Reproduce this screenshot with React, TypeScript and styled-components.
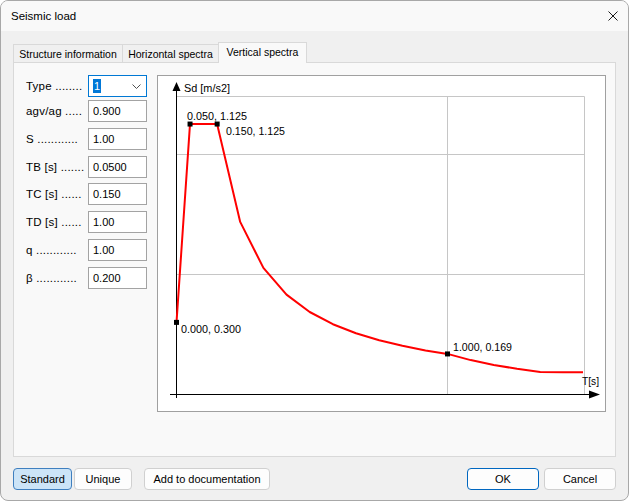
import styled, { createGlobalStyle } from 'styled-components';

const GlobalStyle = createGlobalStyle`
  html, body {
    margin: 0;
    padding: 0;
    background: #ffffff;
  }
  body {
    color: #000000;
    font-family: 'Liberation Sans', Arial, sans-serif;
    font-size: 11px;
  }
  * {
    box-sizing: border-box;
  }
`;

interface TabProps {
  active?: boolean
  width: number
}

interface ButtonProps {
  width: number
  pressed?: boolean
  primary?: boolean
}

interface RowProps {
  tight?: boolean
}

interface GroupProps {
  gap: number
}

const fields = [
  { label: 'agv/ag .....', value: '0.900' },
  { label: 'S ............', value: '1.00' },
  { label: 'TB [s] .......', value: '0.0500' },
  { label: 'TC [s] ......', value: '0.150' },
  { label: 'TD [s] ......', value: '1.00' },
  { label: 'q ............', value: '1.00' },
  { label: 'β ............', value: '0.200' },
];

// chart scale, in svg coords of the plot box
const X = (t: number) => 18.5 + t * 271;
const Y = (v: number) => 318.5 - v * 240.4;

const spectrum = () => {
  const pts: [number, number][] = [[0, 0.3], [0.05, 1.125], [0.15, 1.125]];
  for (let t = 0.235; t < 1.0; t += 0.0855) pts.push([t, (1.125 * 0.15) / t]);
  pts.push([1.0, 0.16875]);
  for (let t = 1.0855; t < 1.5; t += 0.0855) pts.push([t, Math.max((1.125 * 0.15) / (t * t), 0.0928)]);
  pts.push([1.5, 0.0928]);
  return pts.map(([t, v]) => `${X(t).toFixed(1)},${Y(v).toFixed(1)}`).join(' ');
};

const markers: [number, number][] = [[0, 0.3], [0.05, 1.125], [0.15, 1.125], [1.0, 0.16875]];

const labels = [
  { x: 26, y: 16, len: 46, text: 'Sd [m/s2]' },
  { x: 29, y: 44, len: 60, text: '0.050, 1.125' },
  { x: 68, y: 59, len: 59, text: '0.150, 1.125' },
  { x: 23, y: 257, len: 60, text: '0.000, 0.300' },
  { x: 295, y: 274.5, len: 59, text: '1.000, 0.169' },
  { x: 424, y: 309, len: 17, text: 'T[s]' },
];

const Chart = () => (
  <svg width="447" height="335" viewBox="0 0 447 335">
    <g stroke="#c6c6c6" strokeWidth="1" fill="none">
      <line x1="18.5" y1="20.5" x2="426.5" y2="20.5" />
      <line x1="18.5" y1="78.5" x2="426.5" y2="78.5" />
      <line x1="18.5" y1="198.5" x2="426.5" y2="198.5" />
      <line x1="289.5" y1="20.5" x2="289.5" y2="318.5" />
      <line x1="426.5" y1="20.5" x2="426.5" y2="318.5" />
    </g>
    <g stroke="#000000" strokeWidth="1">
      <line x1="18.5" y1="8" x2="18.5" y2="322" />
      <line x1="12" y1="318.5" x2="436" y2="318.5" />
    </g>
    <polygon points="18.5,6 14.5,15 22.5,15" fill="#000000" />
    <polygon points="442,318.5 431,314.5 431,322.5" fill="#000000" />
    <polyline points={spectrum()} fill="none" stroke="#ff0000" strokeWidth="2" strokeLinejoin="round" />
    {markers.map(([t, v]) => (
      <rect key={t} x={X(t) - 2.5} y={Y(v) - 2.5} width="5" height="5" fill="#000000" />
    ))}
    {labels.map(l => (
      <text
        key={l.text}
        x={l.x}
        y={l.y}
        fontFamily="'Liberation Sans', Arial, sans-serif"
        fontSize="11"
        textLength={l.len}
        lengthAdjust="spacingAndGlyphs"
        fill="#000000"
      >
        {l.text}
      </text>
    ))}
  </svg>
);

export default function App() {
  return (
    <>
      <GlobalStyle />
      <Window>
        <TitleBar>
          <Title>Seismic load</Title>
          <svg width="10" height="10" viewBox="0 0 10 10">
            <path d="M0.5 0.5 L9.5 9.5 M9.5 0.5 L0.5 9.5" stroke="#1a1a1a" strokeWidth="1" />
          </svg>
        </TitleBar>
        <Body>
          <TabRow>
            <Tab width={110}>Structure information</Tab>
            <Tab width={97}>Horizontal spectra</Tab>
            <Tab width={89} active>Vertical spectra</Tab>
          </TabRow>
          <Panel>
            <FieldList>
              <Row tight>
                <Label>Type ........</Label>
                <Select>
                  <Selected>1</Selected>
                  <svg width="9" height="5" viewBox="0 0 9 5">
                    <polyline points="0.5,0.5 4.5,4.5 8.5,0.5" fill="none" stroke="#505050" strokeWidth="1" />
                  </svg>
                </Select>
              </Row>
              {fields.map(f => (
                <Row key={f.label}>
                  <Label>{f.label}</Label>
                  <Input readOnly value={f.value} />
                </Row>
              ))}
            </FieldList>
            <ChartBox>
              <Chart />
            </ChartBox>
          </Panel>
          <Footer>
            <Group gap={2}>
              <Button width={59} pressed>Standard</Button>
              <Button width={58}>Unique</Button>
              <Spacer />
              <Button width={126}>Add to documentation</Button>
            </Group>
            <Group gap={5}>
              <Button width={72} primary>OK</Button>
              <Button width={72}>Cancel</Button>
            </Group>
          </Footer>
        </Body>
      </Window>
    </>
  );
}

const Window = styled.div`
  background: #f0f0f0;
  border: 1px solid #a8a8a8;
  border-radius: 8px;
  display: flex;
  flex-direction: column;
  height: 501px;
  overflow: hidden;
  width: 629px;
`;

const TitleBar = styled.div`
  align-items: center;
  background: #f9f9f9;
  display: flex;
  flex: none;
  height: 30px;
  justify-content: space-between;
  padding: 0 10px 0 10px;
`;

const Title = styled.div`
  font-size: 11.5px;
`;

const Body = styled.div`
  display: flex;
  flex-direction: column;
  padding: 11px 12px 0 12px;
`;

const TabRow = styled.div`
  align-items: flex-end;
  display: flex;
  height: 20px;
`;

const Tab = styled.div<TabProps>`
  align-items: center;
  background: ${({ active }) => (active ? '#f9f9f9' : '#f0f0f0')};
  border: 1px solid #d9d9d9;
  border-bottom: none;
  display: flex;
  font-size: 10.5px;
  height: ${({ active }) => (active ? '21px' : '18px')};
  justify-content: center;
  margin-bottom: ${({ active }) => (active ? '-1px' : '0')};
  margin-left: -1px;
  padding-bottom: ${({ active }) => (active ? '2px' : '0')};
  position: relative;
  white-space: nowrap;
  width: ${({ width }) => `${width}px`};
  z-index: ${({ active }) => (active ? 1 : 0)};

  &:first-child {
    margin-left: 0;
  }
`;

const Panel = styled.div`
  background: #f9f9f9;
  border: 1px solid #d9d9d9;
  display: flex;
  gap: 10px;
  height: 395px;
  padding: 12px 10px 0 12px;
`;

const FieldList = styled.div`
  display: flex;
  flex-direction: column;
  gap: 5.75px;
  width: 121px;
`;

const Row = styled.div<RowProps>`
  align-items: center;
  display: flex;
  height: 22px;
  margin-bottom: ${({ tight }) => (tight ? '-2.75px' : '0')};
`;

const Label = styled.div`
  font-size: 11.5px;
  letter-spacing: 0.2px;
  white-space: nowrap;
  width: 62px;
`;

const Input = styled.input`
  background: #ffffff;
  border: 1px solid #a3a3a3;
  color: #000000;
  font-family: 'Liberation Sans', Arial, sans-serif;
  font-size: 11px;
  height: 22px;
  margin: 0;
  outline: none;
  padding: 0 0 0 4px;
  width: 59px;
`;

const Select = styled.div`
  align-items: center;
  background: #ffffff;
  border: 1px solid #0078d4;
  display: flex;
  height: 22px;
  justify-content: space-between;
  padding: 0 5px 0 4px;
  width: 59px;
`;

const Selected = styled.span`
  background: #0078d7;
  color: #ffffff;
  line-height: 14px;
  padding: 0 1px;
`;

const ChartBox = styled.div`
  background: #ffffff;
  border: 1px solid #a0a0a0;
  height: 337px;
  width: 449px;
`;

const Footer = styled.div`
  display: flex;
  justify-content: space-between;
  margin-top: 11px;
`;

const Group = styled.div<GroupProps>`
  display: flex;
  gap: ${({ gap }) => `${gap}px`};
`;

const Spacer = styled.div`
  width: 8px;
`;

const Button = styled.div<ButtonProps>`
  align-items: center;
  background: ${({ pressed }) => (pressed ? '#cce4f7' : '#fdfdfd')};
  border: 1px solid ${({ pressed, primary }) => (pressed ? '#3f7fbf' : primary ? '#0067c0' : '#d0d0d0')};
  border-radius: 4px;
  display: flex;
  height: 22px;
  justify-content: center;
  width: ${({ width }) => `${width}px`};
`;
